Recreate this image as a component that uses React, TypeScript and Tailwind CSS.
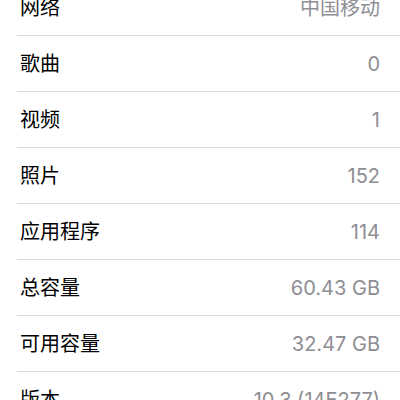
const ROWS: [string, string][] = [
  ["网络", "中国移动"],
  ["歌曲", "0"],
  ["视频", "1"],
  ["照片", "152"],
  ["应用程序", "114"],
  ["总容量", "60.43 GB"],
  ["可用容量", "32.47 GB"],
  ["版本", "10.3 (14E277)"],
];

export default function App() {
  return (
    <div className="h-[400px] w-[400px] overflow-hidden bg-white font-['Inter','Noto_Sans_CJK_SC',sans-serif]">
      <div className="-mt-[20px] flex flex-col">
        {ROWS.map(([label, value]) => (
          <div key={label} className="ml-[17px] flex h-[56px] items-center justify-between border-b border-[#dcdcdf] pl-[3px] pr-[20px]">
            <span className="text-[20px] text-black">{label}</span>
            <span className="text-[20px] text-[#8e8e93]">{value}</span>
          </div>
        ))}
      </div>
    </div>
  );
}
